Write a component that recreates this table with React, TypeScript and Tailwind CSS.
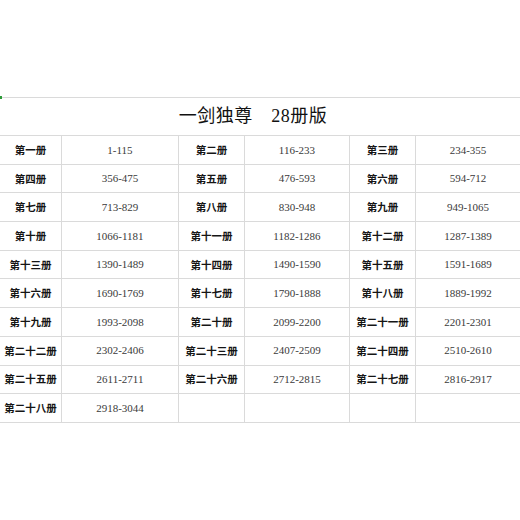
import React from "react";

const rows: [string, string][][] = [
  [["第一册", "1-115"], ["第二册", "116-233"], ["第三册", "234-355"]],
  [["第四册", "356-475"], ["第五册", "476-593"], ["第六册", "594-712"]],
  [["第七册", "713-829"], ["第八册", "830-948"], ["第九册", "949-1065"]],
  [["第十册", "1066-1181"], ["第十一册", "1182-1286"], ["第十二册", "1287-1389"]],
  [["第十三册", "1390-1489"], ["第十四册", "1490-1590"], ["第十五册", "1591-1689"]],
  [["第十六册", "1690-1769"], ["第十七册", "1790-1888"], ["第十八册", "1889-1992"]],
  [["第十九册", "1993-2098"], ["第二十册", "2099-2200"], ["第二十一册", "2201-2301"]],
  [["第二十二册", "2302-2406"], ["第二十三册", "2407-2509"], ["第二十四册", "2510-2610"]],
  [["第二十五册", "2611-2711"], ["第二十六册", "2712-2815"], ["第二十七册", "2816-2917"]],
  [["第二十八册", "2918-3044"], ["", ""], ["", ""]],
];

export default function App() {
  return (
    <div className="w-[520px] h-[520px] bg-white relative pt-[97px] overflow-hidden">
      <div className="absolute left-0 top-[96px] w-[2px] h-[3px] bg-[#2e9b3a]" />
      <div className="grid grid-cols-[62px_117px_66px_105px_66px_104px] w-[520px]">
        <div
          className="col-span-6 h-[39px] border-t border-b border-[#dadada] flex items-center justify-center pr-[14px] text-[18px] text-[#111] tracking-[0.5px]"
          style={{ fontFamily: '"Liberation Serif", "Noto Sans CJK SC", serif' }}
        >
          一剑独尊　28册版
        </div>
        {rows.map((row, ri) =>
          row.map(([label, range], ci) => (
            <React.Fragment key={`${ri}-${ci}`}>
              <div
                className="h-[28.7px] border-b border-r border-[#dadada] flex items-center justify-center text-[10.5px] font-bold text-[#151515] whitespace-nowrap"
                style={{ fontFamily: '"Noto Sans CJK SC", sans-serif' }}
              >
                {label}
              </div>
              <div
                className={
                  ci < 2
                    ? "h-[28.7px] border-b border-r border-[#dadada] flex items-center justify-center text-[11px] text-[#3a3a3a]"
                    : "h-[28.7px] border-b border-[#dadada] flex items-center justify-center text-[11px] text-[#3a3a3a]"
                }
                style={{ fontFamily: '"Liberation Serif", serif' }}
              >
                {range}
              </div>
            </React.Fragment>
          ))
        )}
      </div>
    </div>
  );
}
